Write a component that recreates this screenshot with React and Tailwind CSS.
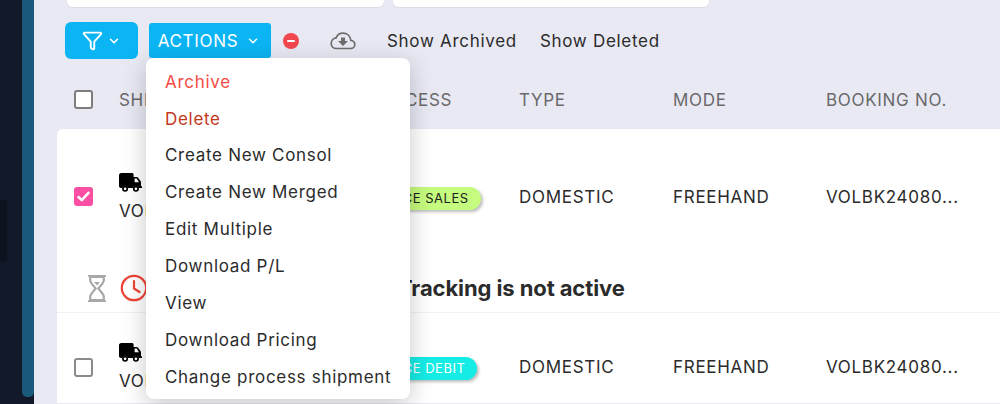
import React from "react";
import { ChevronDown, Filter } from "lucide-react";

function Cloud() {
  return (
    <svg width="26" height="18" viewBox="0 0 26 18" fill="none">
      <path d="M6.5 16.5H20.5C23 16.5 24.8 14.7 24.8 12.4C24.8 10.1 23 8.4 20.8 8.3C20.3 4.2 17.2 1.2 13 1.2C9.8 1.2 7.2 3 6.1 5.9C3.2 6.3 1.2 8.7 1.2 11.4C1.2 14.3 3.5 16.5 6.5 16.5Z" stroke="#6f6f6f" strokeWidth="1.7" />
      <path d="M11 5.5H15V9H18L13 14L8 9H11V5.5Z" fill="#6f6f6f" />
    </svg>
  );
}

function TruckIcon() {
  return (
    <svg width="23" height="20" viewBox="0 0 23 20" fill="black" className="block">
      <path d="M0 2.2C0 1 1 0 2.2 0H13C14 0 14.6.7 14.6 1.6V4H17.6C18.2 4 18.8 4.3 19.2 4.8L22 8.8V13.2H23V15H19.8A3 3 0 0 0 14 15H9A3 3 0 0 0 3.2 15H2C.9 15 0 14.1 0 13V2.2Z" />
      <path d="M15.6 5.6V9.2H20L17.6 5.6Z" fill="white" />
      <circle cx="6.1" cy="15.8" r="2.2" fill="white" stroke="black" strokeWidth="1.7" />
      <circle cx="16.9" cy="15.8" r="2.2" fill="white" stroke="black" strokeWidth="1.7" />
    </svg>
  );
}

function Hourglass() {
  return (
    <svg width="18" height="27" viewBox="0 0 18 27" fill="none" className="block">
      <path d="M2.2 2H15.8V5C15.8 8.2 12.5 10.6 10.4 13.5C12.5 16.4 15.8 18.8 15.8 22V25H2.2V22C2.2 18.8 5.5 16.4 7.6 13.5C5.5 10.6 2.2 8.2 2.2 5V2Z" stroke="#a8a8a8" strokeWidth="2.2" />
      <path d="M0 .8H18M0 26.2H18" stroke="#a8a8a8" strokeWidth="1.8" />
      <path d="M6 7H12L9 10.5Z" fill="#a8a8a8" />
    </svg>
  );
}

function Clock() {
  return (
    <svg width="28" height="28" viewBox="0 0 28 28" fill="none" className="block">
      <circle cx="14" cy="14" r="12.2" stroke="#ee4436" strokeWidth="2.2" />
      <path d="M14 7V14.5L19.5 18" stroke="#ee4436" strokeWidth="2.2" strokeLinecap="round" strokeLinejoin="round" />
    </svg>
  );
}

function Row({ checked, pill, pillClass, first }) {
  const rowHeight = first ? "h-[124px]" : "h-[90px]";
  const pad = first ? "pt-[14px]" : "pt-[20px]";
  const checkPad = first ? "pt-[10px]" : "pt-[18px]";
  return (
    <div className="bg-white">
      <div className={`flex items-center pl-[17px] text-[17px] tracking-[0.7px] text-[#2b2b2b] ${rowHeight}`}>
        <div className={`w-[45px] ${checkPad}`}>
          {checked ? (
            <div className="flex h-[19px] w-[19px] items-center justify-center rounded-[3px] bg-[#fb4fa3]">
              <svg width="13" height="11" viewBox="0 0 13 11" fill="none">
                <path d="M1.5 6L4.8 9.2L11.5 1.8" stroke="white" strokeWidth="2.5" strokeLinecap="round" strokeLinejoin="round" />
              </svg>
            </div>
          ) : (
            <div className="h-[19px] w-[19px] rounded-[3px] border-2 border-[#8a8a8a] bg-white" />
          )}
        </div>
        <div className={`w-[207px] ${pad}`}>
          <TruckIcon />
          <div className="mt-[6px] leading-[24px]">VOLSH2408</div>
        </div>
        <div className={`w-[193px] pl-[15px] ${pad}`}>
          <span className={`inline-block whitespace-nowrap rounded-full py-[4px] pl-[24px] pr-[12px] text-[13px] leading-[15px] tracking-[0.5px] shadow-[2px_2px_3px_rgba(0,0,0,0.25)] ${pillClass}`}>{pill}</span>
        </div>
        <div className={`w-[154px] ${pad}`}>DOMESTIC</div>
        <div className={`w-[153px] ${pad}`}>FREEHAND</div>
        <div className={`whitespace-nowrap ${pad}`}>VOLBK24080...</div>
      </div>
      {first && (
        <div className="flex h-[60px] items-end border-b border-[#f1f1f4] pb-[10px] pl-[31px]">
          <div className="w-[32px]"><Hourglass /></div>
          <Clock />
          <div className="ml-[250px] text-[22px] font-bold leading-[28px] tracking-[-0.1px] text-[#2b2b2b]">Tracking is not active</div>
        </div>
      )}
    </div>
  );
}

const items = [
  ["Archive", "text-[#f44a45]"],
  ["Delete", "text-[#c4371a]"],
  ["Create New Consol", "text-[#2b2b2b]"],
  ["Create New Merged", "text-[#2b2b2b]"],
  ["Edit Multiple", "text-[#2b2b2b]"],
  ["Download P/L", "text-[#2b2b2b]"],
  ["View", "text-[#2b2b2b]"],
  ["Download Pricing", "text-[#2b2b2b]"],
  ["Change process shipment", "text-[#2b2b2b]"],
];

export default function App() {
  return (
    <div className="relative flex h-[404px] w-[1000px] overflow-hidden bg-[#e9e9f4] font-['Inter',sans-serif]">
      <div className="flex w-[34px] shrink-0 bg-[#121a2a]">
        <div className="mt-[200px] h-[62px] w-[7px] rounded-r-[4px] bg-[#0d131f]" />
        <div className="ml-auto h-[397px] w-[12px] rounded-b-[5px] bg-[#1a5a7a]" />
      </div>
      <div className="min-w-0 flex-1">
        <div className="flex h-[7px] gap-[9px] pl-[33px]">
          <div className="h-[7px] w-[317px] rounded-b-[6px] bg-white shadow-[0_1px_1px_rgba(0,0,0,0.06)]" />
          <div className="h-[7px] w-[316px] rounded-b-[6px] bg-white shadow-[0_1px_1px_rgba(0,0,0,0.06)]" />
        </div>
        <div className="mt-[15px] flex h-[37px] items-center pl-[31px] text-[17px] tracking-[0.7px]">
          <button className="flex h-[37px] w-[73px] items-center justify-center gap-[4px] rounded-[6px] bg-[#0bb5f4] text-white">
            <Filter size={21} strokeWidth={2.2} />
            <ChevronDown size={14} strokeWidth={2.6} />
          </button>
          <button className="ml-[11px] flex h-[35px] w-[122px] items-center justify-center gap-[8px] rounded-[3px] bg-[#0bb5f4] pr-[2px] text-white">
            <span className="pt-[2px]">ACTIONS</span>
            <ChevronDown size={14} strokeWidth={2.6} />
          </button>
          <div className="ml-[12px] flex h-[16px] w-[16px] items-center justify-center rounded-full bg-[#f1484f]">
            <div className="h-[2px] w-[8px] rounded bg-white" />
          </div>
          <div className="ml-[31px]"><Cloud /></div>
          <span className="ml-[31px] pt-[2px] text-[#2b2b2b]">Show Archived</span>
          <span className="ml-[23px] pt-[2px] text-[#2b2b2b]">Show Deleted</span>
        </div>
        <div className="flex h-[70px] items-center pl-[40px] pt-[12px] text-[17px] tracking-[0.7px] text-[#6a6a6a]">
          <div className="w-[45px]">
            <div className="mb-[2px] h-[19px] w-[19px] rounded-[3px] border-2 border-[#7d7d7d] bg-white" />
          </div>
          <div className="w-[249px] pt-[2px]">SHIPMENT</div>
          <div className="w-[151px] pt-[2px]">PROCESS</div>
          <div className="w-[154px] pt-[2px]">TYPE</div>
          <div className="w-[153px] pt-[2px]">MODE</div>
          <div className="pt-[2px]">BOOKING NO.</div>
        </div>
        <div className="ml-[23px] w-[960px] overflow-hidden rounded-t-[6px]">
          <Row first checked pill="INVOICE SALES" pillClass="bg-[#c5fb7e] text-[#1d1d1d]" />
          <Row pill="INVOICE DEBIT" pillClass="bg-[#16ece6] text-white" />
        </div>
      </div>
      <div className="absolute left-[146px] top-[58px] h-[341px] w-[264px] rounded-[8px] bg-white pt-[6px] text-[17px] tracking-[0.7px] shadow-[0_6px_24px_rgba(0,0,0,0.22)]">
        {items.map(([t, c]) => (
          <div key={t} className={`flex h-[36.9px] items-center pl-[19px] ${c}`}>{t}</div>
        ))}
      </div>
    </div>
  );
}
